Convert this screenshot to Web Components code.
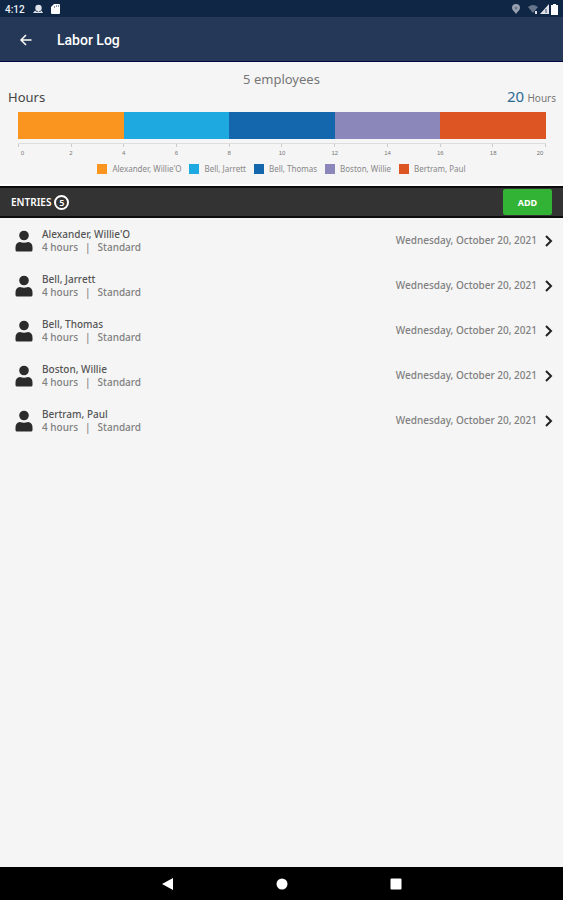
<!DOCTYPE html>
<html lang="en">
<head>
<meta charset="utf-8">
<meta name="viewport" content="width=device-width, initial-scale=1">
<title>Labor Log</title>
<style>
html, body {
  height: 100%;
  margin: 0;
}
body {
  background: #f5f5f5;
  font-family: "Noto Sans", sans-serif;
}
</style>
</head>
<body>
<labor-app>
  <status-bar slot="top">4:12</status-bar>
  <app-bar slot="top">Labor Log</app-bar>
  <hours-chart max="20" step="2">
    <span slot="summary">5 employees</span>
    <span slot="title">Hours</span>
    <span slot="total">20</span>
    <span slot="unit">Hours</span>
  </hours-chart>
  <entries-bar count="5">ENTRIES</entries-bar>
  <entry-list></entry-list>
  <nav-bar slot="bottom"></nav-bar>
</labor-app>

<script>
const employees = [
  { name: "Alexander, Willie'O", hours: 4, color: '#fa951f' },
  { name: 'Bell, Jarrett', hours: 4, color: '#1ea9e1' },
  { name: 'Bell, Thomas', hours: 4, color: '#1467ad' },
  { name: 'Boston, Willie', hours: 4, color: '#8b87bb' },
  { name: 'Bertram, Paul', hours: 4, color: '#dc5523' },
];

function attach(element, html) {
  const template = document.createElement('template');
  template.innerHTML = html;
  const shadowRoot = element.attachShadow({ mode: 'open' });
  shadowRoot.appendChild(template.content);
  return shadowRoot;
}

class LaborApp extends HTMLElement {
  connectedCallback() {
    attach(this, `
<style>
:host {
  display: flex;
  flex-direction: column;
  min-height: 100%;
}
main {
  flex: 1;
}
</style>
<header><slot name="top"></slot></header>
<main><slot></slot></main>
<slot name="bottom"></slot>
`);
  }
}

class StatusBar extends HTMLElement {
  connectedCallback() {
    attach(this, `
<style>
:host {
  display: flex;
  align-items: center;
  gap: 8px;
  height: 16px;
  padding: 1px 5px 0;
  background: #102645;
  color: #eef1f5;
  font: 500 10px Roboto, sans-serif;
}
.right {
  display: flex;
  align-items: center;
  gap: 2px;
  margin-left: auto;
}
.pin {
  margin-right: 6px;
}
</style>
<slot></slot>
<svg width="10" height="10" viewBox="0 0 10 10" fill="#dfe3e9"><circle cx="5.500" cy="4" r="3.200"/><path d="M0 9l2-2.500L4 8l1.500-1L7 8l1.500-1.500L10 9z"/></svg>
<svg width="9" height="10" viewBox="0 0 9 10"><path d="M3 0h5a1 1 0 0 1 1 1v8a1 1 0 0 1-1 1H1a1 1 0 0 1-1-1V3z" fill="#fff"/><path d="M3.500 2v2M5.500 1v2M7.500 1v2" stroke="#8b95a5"/></svg>
<div class="right">
  <svg class="pin" width="8" height="10" viewBox="0 0 8 10"><path d="M4 0a4 4 0 0 1 4 4c0 2-2 3-4 6C2 7 0 6 0 4a4 4 0 0 1 4-4z" fill="#98a1b0"/><circle cx="4" cy="4" r="1.500" fill="#6a778b"/></svg>
  <svg width="10" height="9" viewBox="0 0 10 9"><path d="M0 2q5-4 10 0L5 8z" fill="#66758a"/><path d="M7 6h2v3H7z" fill="#dfe3e9"/></svg>
  <svg width="9" height="10" viewBox="0 0 9 10"><path d="M9 0v10H0z" fill="#dfe3e9"/><path d="M6 5v4" stroke="#3d4d66"/></svg>
  <svg width="7" height="11" viewBox="0 0 7 11"><path d="M2 0h3v1h2v10H0V1h2z" fill="#fff"/></svg>
</div>
`);
  }
}

class AppBar extends HTMLElement {
  connectedCallback() {
    attach(this, `
<style>
:host {
  display: flex;
  align-items: center;
  gap: 25px;
  height: 42px;
  padding: 2px 20px 0;
  background: #253857;
  border-bottom: 1px solid #03053f;
  color: #fff;
}
button {
  display: flex;
  padding: 0;
  border: 0;
  background: none;
}
h1 {
  margin: 0;
  font: 500 14px Roboto, sans-serif;
}
</style>
<button aria-label="Back">
  <svg width="12" height="12" viewBox="0 0 12 12" fill="none" stroke="#fff" stroke-width="1.500"><path d="M11.500 6H1.500M6 1L1 6l5 5"/></svg>
</button>
<h1><slot></slot></h1>
`);
  }
}

class HoursChart extends HTMLElement {
  connectedCallback() {
    const max = Number(this.getAttribute('max'));
    const step = Number(this.getAttribute('step'));
    const bars = employees.map(e =>
      `<div style="flex:${e.hours};background:${e.color}"></div>`).join('');
    let ticks = '';
    let labels = '';
    for (let i = 0; i <= max; i += step) {
      ticks += '<i></i>';
      labels += `<span>${i}</span>`;
    }
    const legend = employees.map(e =>
      `<li><i style="background:${e.color}"></i>${e.name}</li>`).join('');

    attach(this, `
<style>
:host {
  display: block;
  padding-top: 9px;
  border-bottom: 2px solid #fff;
}
.summary {
  text-align: center;
  font-size: 13px;
  line-height: 16px;
  color: #777;
}
.heading {
  display: flex;
  justify-content: space-between;
  align-items: center;
  height: 20px;
  padding: 0 7px 0 8px;
  font-size: 13px;
  line-height: 20px;
  color: #444;
}
.total {
  color: #2c6a96;
  font-size: 15px;
}
.unit {
  color: #777;
  font-size: 10px;
}
.plot {
  margin: 5px 17px 0 18px;
}
.bars {
  display: flex;
  height: 27px;
}
.ticks {
  display: flex;
  justify-content: space-between;
  height: 3px;
  margin-top: 4px;
  border-top: 1px solid #ddd;
}
.ticks i {
  width: 1px;
  background: #ccc;
}
/* every label is centred on its tick, the outer two stay inside the plot */
.labels {
  display: flex;
  justify-content: space-between;
  margin: 0 -6px;
  font: 6px/12px "Liberation Sans", sans-serif;
  color: #777;
}
.labels span {
  width: 12px;
  text-align: center;
}
.labels span:first-child {
  text-align: right;
}
.labels span:last-child {
  margin: 0 6px 0 -6px;
}
ul {
  display: flex;
  justify-content: center;
  gap: 8px;
  margin: 0;
  padding: 5px 0 10px;
  list-style: none;
  font-size: 8px;
  line-height: 10px;
  color: #888;
}
li {
  display: flex;
  gap: 5px;
}
li i {
  width: 10px;
  height: 10px;
}
</style>
<div class="summary"><slot name="summary"></slot></div>
<div class="heading">
  <slot name="title"></slot>
  <div><span class="total"><slot name="total"></slot></span> <span class="unit"><slot name="unit"></slot></span></div>
</div>
<div class="plot">
  <div class="bars">${bars}</div>
  <div class="ticks">${ticks}</div>
  <div class="labels">${labels}</div>
</div>
<ul>${legend}</ul>
`);
  }
}

class EntriesBar extends HTMLElement {
  connectedCallback() {
    attach(this, `
<style>
:host {
  display: flex;
  align-items: center;
  gap: 3px;
  height: 28px;
  padding: 0 11px;
  background: #333;
  border: solid #0c0c0c;
  border-width: 2px 0;
  color: #fff;
  font-size: 10px;
  font-weight: 600;
}
.count {
  box-sizing: border-box;
  width: 15px;
  height: 15px;
  border: 2px solid #fff;
  border-radius: 50%;
  font-size: 9px;
  line-height: 11px;
  text-align: center;
}
button {
  width: 49px;
  height: 26px;
  margin-left: auto;
  padding: 0;
  border: 0;
  border-radius: 2px;
  background: #32b335;
  color: #fff;
  font: bold 9px "Noto Sans", sans-serif;
}
</style>
<slot></slot>
<span class="count">${this.getAttribute('count')}</span>
<button>ADD</button>
`);
  }
}

class EntryRow extends HTMLElement {
  connectedCallback() {
    attach(this, `
<style>
:host {
  display: block;
}
a {
  display: flex;
  align-items: center;
  height: 45px;
  padding: 0 10px 0 15px;
  color: #808080;
  text-decoration: none;
  font-size: 10px;
  font-weight: 500;
  line-height: 13px;
}
.text {
  flex: 1;
  margin-left: 9px;
}
.name {
  color: #555;
}
.detail {
  display: flex;
  gap: 7px;
}
.chevron {
  margin-left: 8px;
}
</style>
<a href="#entry">
  <svg width="18" height="22" viewBox="0 0 18 22" fill="#2b2b2b"><circle cx="9" cy="5.500" r="4.800"/><path d="M.500 20v-2.500q0-5 4.500-5.500 4 1.500 8 0 4.500.500 4.500 5.500V20q0 1.500-1.500 1.500H2Q.500 21.500.500 20z"/></svg>
  <div class="text">
    <div class="name"><slot name="name"></slot></div>
    <div class="detail"><slot name="hours"></slot><span>|</span><slot name="type"></slot></div>
  </div>
  <slot name="date"></slot>
  <svg class="chevron" width="8" height="12" viewBox="0 0 8 12" fill="none" stroke="#222" stroke-width="2"><path d="M1 1l5 5-5 5"/></svg>
</a>
`);
  }
}

class EntryList extends HTMLElement {
  connectedCallback() {
    const rows = employees.map(e => `
<entry-row>
  <span slot="name">${e.name}</span>
  <span slot="hours">${e.hours} hours</span>
  <span slot="type">Standard</span>
  <span slot="date">Wednesday, October 20, 2021</span>
</entry-row>`).join('');
    attach(this, `<style>:host { display: block; }</style>${rows}`);
  }
}

class NavBar extends HTMLElement {
  connectedCallback() {
    attach(this, `
<style>
:host {
  display: flex;
  justify-content: center;
  align-items: center;
  gap: 102px;
  height: 33px;
  background: #000;
}
button {
  display: flex;
  padding: 0;
  border: 0;
  background: none;
}
</style>
<button aria-label="Back"><svg width="12" height="12" viewBox="0 0 12 12" fill="#fff"><path d="M11 0v12L0 6z"/></svg></button>
<button aria-label="Home"><svg width="12" height="12" viewBox="0 0 12 12" fill="#fff"><circle cx="6" cy="6" r="5.500"/></svg></button>
<button aria-label="Recent apps"><svg width="12" height="12" viewBox="0 0 12 12" fill="#fff"><rect x=".5" y=".5" width="11" height="11" rx="1"/></svg></button>
`);
  }
}

customElements.define('labor-app', LaborApp);
customElements.define('status-bar', StatusBar);
customElements.define('app-bar', AppBar);
customElements.define('hours-chart', HoursChart);
customElements.define('entries-bar', EntriesBar);
customElements.define('entry-row', EntryRow);
customElements.define('entry-list', EntryList);
customElements.define('nav-bar', NavBar);
</script>
</body>
</html>
